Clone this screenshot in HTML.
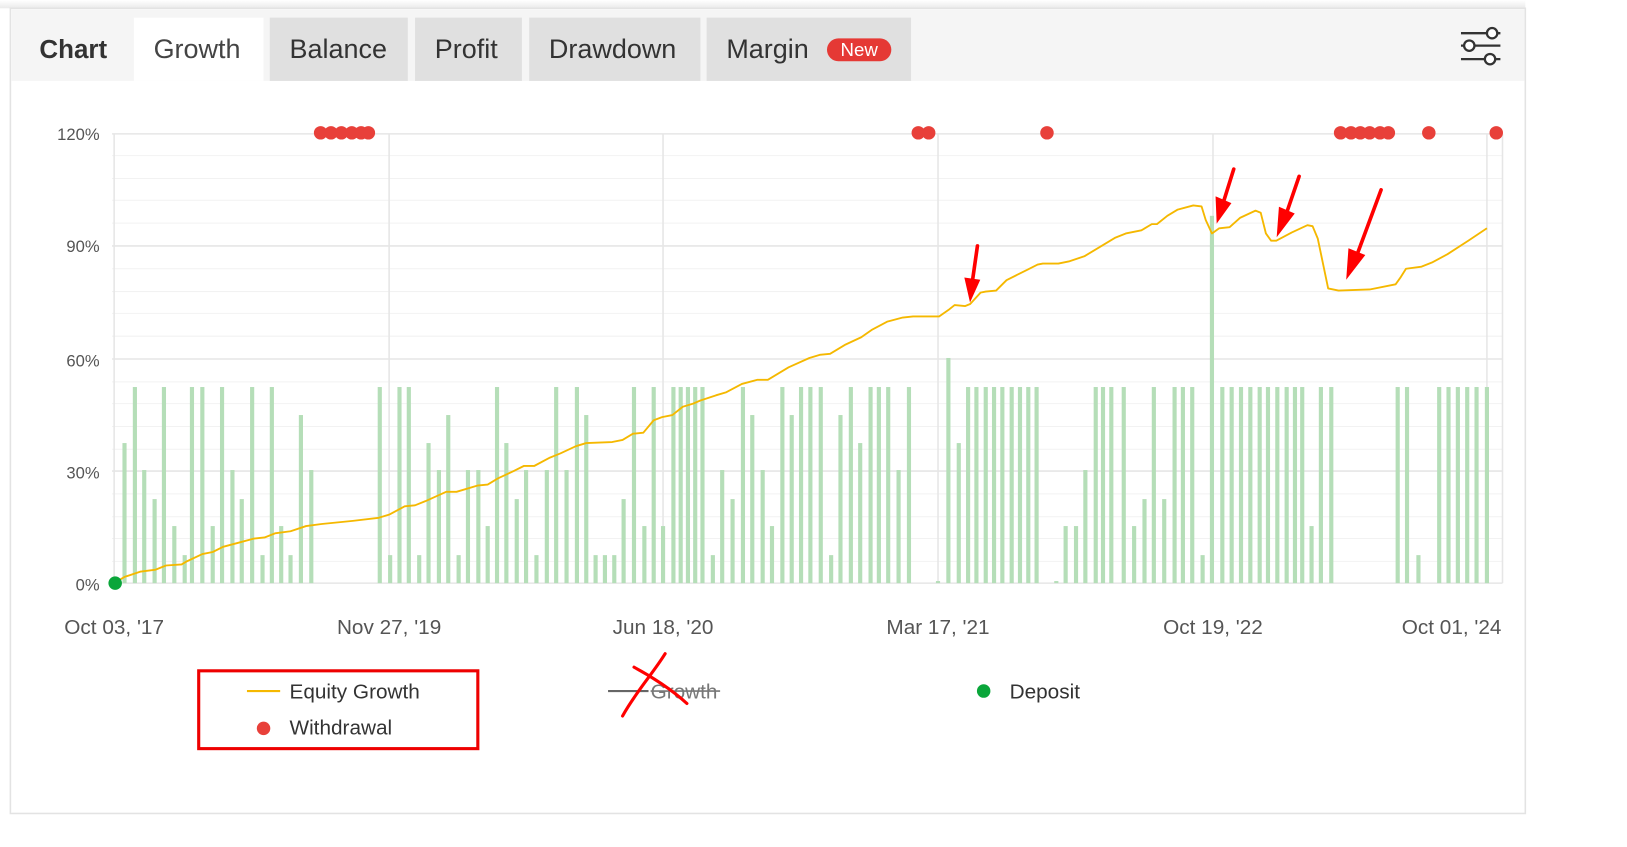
<!DOCTYPE html>
<html><head><meta charset="utf-8"><style>html,body{margin:0;padding:0;background:#fff;overflow:hidden}svg{display:block}text{font-family:"Liberation Sans",Arial,sans-serif}</style></head>
<body>
<svg width="1627" height="847" viewBox="0 0 1568 816.3" preserveAspectRatio="none" xmlns="http://www.w3.org/2000/svg">
<defs><linearGradient id="sh" x1="0" y1="0" x2="0" y2="1"><stop offset="0" stop-color="#fff"/><stop offset="1" stop-color="#eaeaea"/></linearGradient></defs>
<rect x="0" y="0" width="1470" height="8" fill="url(#sh)"/>
<rect x="10" y="8" width="1460" height="776" fill="#fff" stroke="#e3e3e3" stroke-width="1.5"/>
<rect x="11" y="9" width="1458" height="69" fill="#f5f5f5"/>
<rect x="129" y="17" width="125" height="61" fill="#fff"/>
<rect x="260" y="17" width="133" height="61" fill="#e0e0e0"/>
<rect x="400" y="17" width="103" height="61" fill="#e0e0e0"/>
<rect x="510" y="17" width="165" height="61" fill="#e0e0e0"/>
<rect x="681" y="17" width="197" height="61" fill="#e0e0e0"/>
<g font-size="26" fill="#333">
<text x="38" y="56" font-weight="bold" font-size="25">Chart</text>
<text x="148" y="56" fill="#444">Growth</text>
<text x="279" y="56">Balance</text>
<text x="419" y="56">Profit</text>
<text x="529" y="56">Drawdown</text>
<text x="700" y="56">Margin</text>
</g>
<rect x="797" y="37" width="62" height="22" rx="11" fill="#e53935"/>
<text x="828" y="54" font-size="18" fill="#fff" text-anchor="middle">New</text>
<g stroke="#333" stroke-width="2.2" fill="#fff">
<line x1="1408" y1="32" x2="1446" y2="32"/><line x1="1408" y1="44" x2="1446" y2="44"/><line x1="1408" y1="57" x2="1446" y2="57"/>
<circle cx="1438" cy="32" r="5"/><circle cx="1416" cy="44" r="5"/><circle cx="1436" cy="57" r="5"/>
</g>
<g stroke="#f2f2f2" stroke-width="1">
<line x1="108" y1="150" x2="1448" y2="150"/><line x1="108" y1="172" x2="1448" y2="172"/><line x1="108" y1="193" x2="1448" y2="193"/><line x1="108" y1="215" x2="1448" y2="215"/>
<line x1="108" y1="259" x2="1448" y2="259"/><line x1="108" y1="281" x2="1448" y2="281"/><line x1="108" y1="302" x2="1448" y2="302"/><line x1="108" y1="324" x2="1448" y2="324"/>
<line x1="108" y1="368" x2="1448" y2="368"/><line x1="108" y1="389" x2="1448" y2="389"/><line x1="108" y1="411" x2="1448" y2="411"/><line x1="108" y1="433" x2="1448" y2="433"/>
<line x1="108" y1="476" x2="1448" y2="476"/><line x1="108" y1="498" x2="1448" y2="498"/><line x1="108" y1="519" x2="1448" y2="519"/><line x1="108" y1="541" x2="1448" y2="541"/>
</g>
<g stroke="#e6e6e6" stroke-width="1.5">
<line x1="108" y1="129" x2="1448" y2="129"/><line x1="108" y1="237" x2="1448" y2="237"/><line x1="108" y1="346" x2="1448" y2="346"/><line x1="108" y1="454" x2="1448" y2="454"/><line x1="108" y1="562" x2="1448" y2="562"/>
<line x1="110" y1="129" x2="110" y2="562"/><line x1="375" y1="129" x2="375" y2="562"/><line x1="639" y1="129" x2="639" y2="562"/><line x1="904" y1="129" x2="904" y2="562"/><line x1="1169" y1="129" x2="1169" y2="562"/><line x1="1433" y1="129" x2="1433" y2="562"/><line x1="1448" y1="129" x2="1448" y2="562"/>
</g>
<g font-size="16" fill="#555" text-anchor="end">
<text x="96" y="135">120%</text><text x="96" y="243">90%</text><text x="96" y="353">60%</text><text x="96" y="461">30%</text><text x="96" y="569">0%</text>
</g>
<g font-size="20" fill="#555" text-anchor="middle">
<text x="110" y="611">Oct 03, '17</text><text x="375" y="611">Nov 27, '19</text><text x="639" y="611">Jun 18, '20</text><text x="904" y="611">Mar 17, '21</text><text x="1169" y="611">Oct 19, '22</text><text x="1447" y="611" text-anchor="end">Oct 01, '24</text>
</g>
<g fill="#b5deb8">
<rect x="118" y="427" width="4" height="135"/><rect x="128" y="373" width="4" height="189"/><rect x="137" y="453" width="4" height="109"/><rect x="147" y="481" width="4" height="81"/><rect x="156" y="373" width="4" height="189"/><rect x="166" y="507" width="4" height="55"/><rect x="176" y="535" width="4" height="27"/><rect x="183" y="373" width="4" height="189"/><rect x="193" y="373" width="4" height="189"/><rect x="203" y="507" width="4" height="55"/><rect x="212" y="373" width="4" height="189"/><rect x="222" y="453" width="4" height="109"/><rect x="231" y="481" width="4" height="81"/><rect x="241" y="373" width="4" height="189"/><rect x="251" y="535" width="4" height="27"/><rect x="260" y="373" width="4" height="189"/><rect x="269" y="507" width="4" height="55"/><rect x="278" y="535" width="4" height="27"/><rect x="288" y="400" width="4" height="162"/><rect x="298" y="453" width="4" height="109"/>
<rect x="364" y="373" width="4" height="189"/><rect x="374" y="535" width="4" height="27"/><rect x="383" y="373" width="4" height="189"/><rect x="392" y="373" width="4" height="189"/><rect x="402" y="535" width="4" height="27"/><rect x="411" y="427" width="4" height="135"/><rect x="421" y="453" width="4" height="109"/><rect x="430" y="400" width="4" height="162"/><rect x="440" y="535" width="4" height="27"/><rect x="449" y="453" width="4" height="109"/><rect x="459" y="453" width="4" height="109"/><rect x="468" y="507" width="4" height="55"/><rect x="477" y="373" width="4" height="189"/><rect x="486" y="427" width="4" height="135"/><rect x="496" y="481" width="4" height="81"/><rect x="505" y="453" width="4" height="109"/><rect x="515" y="535" width="4" height="27"/><rect x="525" y="453" width="4" height="109"/><rect x="534" y="373" width="4" height="189"/><rect x="544" y="453" width="4" height="109"/><rect x="554" y="373" width="4" height="189"/><rect x="563" y="400" width="4" height="162"/><rect x="572" y="535" width="4" height="27"/><rect x="581" y="535" width="4" height="27"/><rect x="590" y="535" width="4" height="27"/><rect x="599" y="481" width="4" height="81"/><rect x="609" y="373" width="4" height="189"/><rect x="619" y="507" width="4" height="55"/><rect x="628" y="373" width="4" height="189"/><rect x="637" y="507" width="4" height="55"/><rect x="647" y="373" width="4" height="189"/><rect x="654" y="373" width="4" height="189"/><rect x="661" y="373" width="4" height="189"/><rect x="668" y="373" width="4" height="189"/><rect x="675" y="373" width="4" height="189"/><rect x="685" y="535" width="4" height="27"/><rect x="694" y="453" width="4" height="109"/><rect x="704" y="481" width="4" height="81"/><rect x="714" y="373" width="4" height="189"/><rect x="723" y="400" width="4" height="162"/><rect x="733" y="453" width="4" height="109"/><rect x="742" y="507" width="4" height="55"/><rect x="752" y="373" width="4" height="189"/><rect x="761" y="400" width="4" height="162"/><rect x="770" y="373" width="4" height="189"/><rect x="779" y="373" width="4" height="189"/><rect x="789" y="373" width="4" height="189"/><rect x="799" y="535" width="4" height="27"/><rect x="808" y="400" width="4" height="162"/><rect x="818" y="373" width="4" height="189"/><rect x="827" y="427" width="4" height="135"/><rect x="837" y="373" width="4" height="189"/><rect x="845" y="373" width="4" height="189"/><rect x="854" y="373" width="4" height="189"/><rect x="864" y="453" width="4" height="109"/><rect x="874" y="373" width="4" height="189"/>
<rect x="902" y="560" width="4" height="2"/><rect x="912" y="345" width="4" height="217"/><rect x="922" y="427" width="4" height="135"/><rect x="931" y="373" width="4" height="189"/><rect x="939" y="373" width="4" height="189"/><rect x="948" y="373" width="4" height="189"/><rect x="956" y="373" width="4" height="189"/><rect x="964" y="373" width="4" height="189"/><rect x="973" y="373" width="4" height="189"/><rect x="981" y="373" width="4" height="189"/><rect x="989" y="373" width="4" height="189"/><rect x="997" y="373" width="4" height="189"/><rect x="1016" y="560" width="4" height="2"/><rect x="1025" y="507" width="4" height="55"/><rect x="1035" y="507" width="4" height="55"/><rect x="1044" y="453" width="4" height="109"/><rect x="1054" y="373" width="4" height="189"/><rect x="1061" y="373" width="4" height="189"/><rect x="1069" y="373" width="4" height="189"/><rect x="1081" y="373" width="4" height="189"/><rect x="1091" y="507" width="4" height="55"/><rect x="1101" y="481" width="4" height="81"/><rect x="1110" y="373" width="4" height="189"/><rect x="1120" y="481" width="4" height="81"/><rect x="1130" y="373" width="4" height="189"/><rect x="1138" y="373" width="4" height="189"/><rect x="1147" y="373" width="4" height="189"/><rect x="1157" y="535" width="4" height="27"/><rect x="1166" y="208" width="4" height="354"/><rect x="1176" y="373" width="4" height="189"/><rect x="1185" y="373" width="4" height="189"/><rect x="1194" y="373" width="4" height="189"/><rect x="1203" y="373" width="4" height="189"/><rect x="1212" y="373" width="4" height="189"/><rect x="1220" y="373" width="4" height="189"/><rect x="1229" y="373" width="4" height="189"/><rect x="1238" y="373" width="4" height="189"/><rect x="1246" y="373" width="4" height="189"/><rect x="1253" y="373" width="4" height="189"/><rect x="1262" y="507" width="4" height="55"/><rect x="1271" y="373" width="4" height="189"/><rect x="1281" y="373" width="4" height="189"/><rect x="1345" y="373" width="4" height="189"/><rect x="1354" y="373" width="4" height="189"/><rect x="1365" y="535" width="4" height="27"/><rect x="1385" y="373" width="4" height="189"/><rect x="1394" y="373" width="4" height="189"/><rect x="1403" y="373" width="4" height="189"/><rect x="1412" y="373" width="4" height="189"/><rect x="1421" y="373" width="4" height="189"/><rect x="1431" y="373" width="4" height="189"/>
</g>
<polyline fill="none" stroke="#f5b800" stroke-width="1.8" stroke-linejoin="round" points="110,562 120,556 135,551 150,549 160,545 175,544 180,541 195,534 205,532 215,527 230,523 245,519 255,518 265,514 280,512 295,507 310,505 340,502 365,499 375,496 390,488 400,487 410,483 430,474 440,474 460,468 470,467 480,461 495,454 505,449 515,449 530,441 540,437 555,430 565,427 590,426 600,424 610,418 620,417 630,405 638,402 648,400 658,392 668,389 675,386 690,381 700,378 715,370 730,366 740,366 760,354 780,345 790,342 800,341 815,332 830,325 840,318 855,310 870,306 880,305 905,305 915,298 920,294 930,295 935,293 945,282 950,281 960,280 970,270 980,265 990,260 1000,255 1005,254 1020,254 1030,252 1045,247 1060,238 1075,229 1085,225 1100,222 1110,216 1115,216 1125,208 1135,202 1150,198 1158,199 1162,212 1168,225 1175,220 1185,219 1195,210 1210,203 1215,205 1220,225 1225,232 1230,232 1245,224 1260,217 1265,218 1270,230 1280,278 1290,280 1320,279 1345,274 1350,267 1355,259 1370,257 1380,253 1395,245 1415,232 1433,220"/>
<circle cx="111" cy="562" r="6.5" fill="#0aa63a"/>
<g fill="#e8403a">
<circle cx="309" cy="128" r="6.5"/><circle cx="319" cy="128" r="6.5"/><circle cx="329" cy="128" r="6.5"/><circle cx="339" cy="128" r="6.5"/><circle cx="348" cy="128" r="6.5"/><circle cx="355" cy="128" r="6.5"/>
<circle cx="885" cy="128" r="6.5"/><circle cx="895" cy="128" r="6.5"/><circle cx="1009" cy="128" r="6.5"/>
<circle cx="1292" cy="128" r="6.5"/><circle cx="1302" cy="128" r="6.5"/><circle cx="1311" cy="128" r="6.5"/><circle cx="1320" cy="128" r="6.5"/><circle cx="1330" cy="128" r="6.5"/><circle cx="1338" cy="128" r="6.5"/>
<circle cx="1377" cy="128" r="6.5"/><circle cx="1442" cy="128" r="6.5"/>
</g>
<g stroke="#f00" stroke-width="3.5" stroke-linecap="round" fill="#f00">
<line x1="942" y1="237" x2="937" y2="272"/><polygon points="930,268 944,270 935,290" stroke-width="1"/>
<line x1="1189" y1="163" x2="1179" y2="195"/><polygon points="1172,190 1186,196 1173,214" stroke-width="1"/>
<line x1="1252" y1="170" x2="1240" y2="205"/><polygon points="1233,200 1247,206 1231,227" stroke-width="1"/>
<line x1="1331" y1="183" x2="1308" y2="245"/><polygon points="1300,240 1315,246 1298,268" stroke-width="1"/>
</g>
<rect x="191.5" y="646.5" width="269" height="75" fill="none" stroke="#e00" stroke-width="3"/>
<line x1="238" y1="666" x2="270" y2="666" stroke="#f5b800" stroke-width="2"/>
<text x="279" y="673" font-size="20" fill="#333">Equity Growth</text>
<circle cx="254" cy="702" r="6.5" fill="#e8403a"/>
<text x="279" y="708" font-size="20" fill="#333">Withdrawal</text>
<line x1="586" y1="666" x2="625" y2="666" stroke="#666" stroke-width="2"/>
<text x="627" y="673" font-size="20" fill="#777">Growth</text>
<line x1="627" y1="666" x2="694" y2="666" stroke="#777" stroke-width="1.5"/>
<path d="M641,630 C630,648 612,668 600,690" stroke="#f00" stroke-width="3" fill="none" stroke-linecap="round"/>
<path d="M611,643 C628,652 648,665 662,678" stroke="#f00" stroke-width="3" fill="none" stroke-linecap="round"/>
<circle cx="948" cy="666" r="6.5" fill="#0aa63a"/>
<text x="973" y="673" font-size="20" fill="#333">Deposit</text>
</svg>
</body></html>
